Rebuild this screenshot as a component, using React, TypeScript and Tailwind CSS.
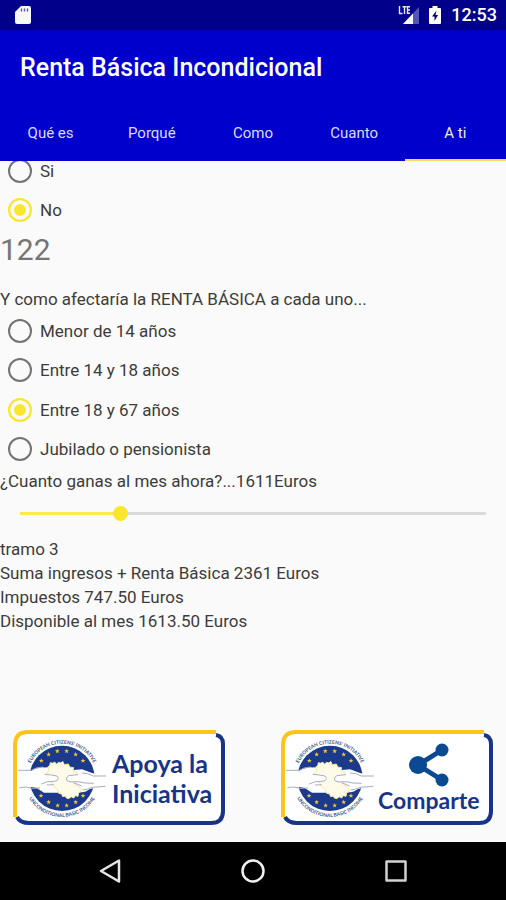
import React, { useState } from 'react';

const tabs = ['Qué es', 'Porqué', 'Como', 'Cuanto', 'A ti'];
const ages = ['Menor de 14 años', 'Entre 14 y 18 años', 'Entre 18 y 67 años', 'Jubilado o pensionista'];
const MAX_INCOME = 7800;

const stars = [
  [88, 92], [110, 73], [136, 63], [164, 63], [191, 73], [213, 92],
  [87, 197], [110, 216], [137, 226], [164, 226], [191, 216], [213, 197],
];

const starPath = 'M0 -7 L2 -2 L7 -2 L3 1.5 L4.5 6.5 L0 3.5 L-4.5 6.5 L-3 1.5 L-7 -2 L-2 -2 Z';

const StatusBar = () => (
  <div className="flex h-[30px] shrink-0 items-center bg-[#00008b] pr-[9px] pl-[15px] text-white">
    <svg width="16" height="20" viewBox="0 0 16 20" aria-hidden="true">
      <path d="M6 1h8q2 0 2 2v14q0 2-2 2H2q-2 0-2-2V7z" fill="#f7f7f7" />
      <path d="M6.500 3.500v3M9.500 3.500v3M12.500 3.500v3" stroke="#5a5aa8" strokeWidth="1.400" />
    </svg>
    <svg className="ml-auto" width="22" height="20" viewBox="0 0 22 20" aria-hidden="true">
      <path d="M21 2v17H5z" fill="#5555b8" />
      <path d="M15 8.500V19H5z" fill="#fff" />
      <path d="M1.500 1v7.500h3M4.500 1.800h4M6.500 1.800V9M12 1.800H9.500V8.200H12M9.500 5H12" fill="none" stroke="#e8e8f8" strokeWidth="1.400" />
    </svg>
    <svg className="ml-[9px]" width="12" height="20" viewBox="0 0 12 20" aria-hidden="true">
      <path d="M3.500 1h5v2H11q1 0 1 1v14q0 1-1 1H1q-1 0-1-1V4q0-1 1-1h2.500z" fill="#fff" />
      <path d="M7.500 5.500L3 11.500h2.500v4.500L9 10H6.500z" fill="#00008b" />
    </svg>
    <span className="ml-[10px] text-[18px] leading-[24px] font-medium">12:53</span>
  </div>
);

type RadioProps = {
  name: string;
  label: string;
  checked: boolean;
  onChange: () => void;
};

const Radio = ({ name, label, checked, onChange }: RadioProps) => (
  <label className="flex items-center gap-2 pl-2">
    <input
      type="radio"
      name={name}
      checked={checked}
      onChange={onChange}
      className="size-6 appearance-none rounded-full border-2 border-[#737373] checked:border-[#fbe62e] checked:bg-[#fbe62e] checked:shadow-[inset_0_0_0_4px_#fafafa]"
    />
    {label}
  </label>
);

const Emblem = ({ id }: { id: string }) => (
  <svg width="99" height="96" viewBox="3 0 297 288" className="shrink-0" aria-hidden="true">
    <defs>
      <path id={`${id}-top`} d="M45 146a105 105 0 0 1 210 0" />
      <path id={`${id}-bottom`} d="M35 146a115 115 0 0 0 230 0" />
    </defs>
    <circle cx="150" cy="145" r="98" fill="#1c3a8c" />
    {stars.map(([x, y]) => (
      <path key={`${x}-${y}`} d={starPath} transform={`translate(${x} ${y})`} fill="#f4c63c" />
    ))}
    {/* arms */}
    <path d="M18 121l40 1q12-8 29-9l20-1 45 20 34-12 24-2 28 10 44 12v29l-36 4q-14 2-30 13l-20 2H96l-22-14-20-4-36-2z" fill="#fefefe" />
    {/* map of Europe */}
    <path
      d="M102 132l8-10-2-12 5-2 2-10 8 2 4-4 7 6 6-5 7 2 5-5 5 10 12-2 4 9 12 2-2 9 14 8-12 12-4 14 22 16 5 12-8 4-2 11-8-2-5 7-8-4-6 6-8-2-3-6-8 2-3-8-9-2-4-12-13-10-9-22z"
      fill="#fffbe9"
      stroke="#f5e6a8"
      strokeWidth="3"
    />
    {/* hands */}
    <path d="M60 122q12-8 34-10l8 20q30 2 39 8 6 8-2 12-10 4-30 4l-15 17-34-3z" fill="#fefefe" />
    <path d="M244 136q-18-13-36-16l-16 14q-24 2-28 12 0 9 20 9l22 14 14 16q14-10 26-12z" fill="#fefefe" />
    <path
      d="M18 121h40q12-9 34-10M22 173q20-5 38 2l24-1M98 133q18 1 37 5 9 7 0 14-15 4-29 3l-18 7M105 165l20-1M282 138h-38q-18-10-34-9M280 169l-40 3q-13 7-28 8M198 134l-28 3q-11 7-5 15 9 6 20 3 16-1 34 4l26 1M185 158l24 10"
      fill="none"
      stroke="#a7adc5"
      strokeWidth="3"
    />
    <g fill="#42548c" fontSize="15" className="font-[Lato,sans-serif]">
      <text>
        <textPath href={`#${id}-top`} startOffset="50%" textAnchor="middle">EUROPEAN CITIZENS' INITIATIVE</textPath>
      </text>
      <text>
        <textPath href={`#${id}-bottom`} startOffset="50%" textAnchor="middle">UNCONDITIONAL BASIC INCOME</textPath>
      </text>
    </g>
  </svg>
);

const BannerButton = ({ id, children }: { id: string; children: React.ReactNode }) => (
  <button
    type="button"
    className="relative flex h-24 w-[213px] items-center rounded-[14px] bg-white font-[Lato,sans-serif] font-bold text-[#173489]"
  >
    <svg className="absolute inset-0 size-full" viewBox="0 0 213 96" fill="none" strokeWidth="4" aria-hidden="true">
      <path d="M2 87V15Q2 2 15 2H203" stroke="#fcc41c" />
      <path d="M203 5Q210 6 210 14V81Q210 93 198 93H16Q7 93 4 87" stroke="#173489" />
    </svg>
    <Emblem id={id} />
    {children}
  </button>
);

const App = () => {
  const [tab, setTab] = useState('A ti');
  const [answer, setAnswer] = useState('No');
  const [age, setAge] = useState('Entre 18 y 67 años');
  const [income, setIncome] = useState<number>(1611);
  const filled = (income / MAX_INCOME) * 100;

  return (
    <div className="flex h-screen flex-col bg-[#fafafa] font-[Roboto,sans-serif] text-[17px] leading-[24px] text-[#3c3c3c]">
      <StatusBar />
      <header className="shrink-0 bg-[#0000cd] text-white">
        <h1 className="flex h-[75px] items-center px-5 text-[25px] leading-[30px] font-medium">Renta Básica Incondicional</h1>
        <nav className="grid h-14 grid-cols-5">
          {tabs.map((t) => (
            <button
              key={t}
              type="button"
              onClick={() => setTab(t)}
              className={`border-b-2 pt-[2px] text-[15px] ${t === tab ? 'border-[#fbdc50] text-[#ececfc]' : 'border-transparent text-[#dcdcf8]'}`}
            >
              {t}
            </button>
          ))}
        </nav>
      </header>

      <main className="flex flex-1 flex-col overflow-hidden">
        <div className="-mt-[10px]">
          <div className="grid h-[79px] grid-rows-2">
            {['Si', 'No'].map((o) => (
              <Radio key={o} name="answer" label={o} checked={answer === o} onChange={() => setAnswer(o)} />
            ))}
          </div>
          <p className="text-[30px] leading-[40px] text-[#757575]">122</p>
          <p className="mt-[17px]">Y como afectaría la RENTA BÁSICA a cada uno...</p>
          <div className="grid h-[158px] grid-rows-4">
            {ages.map((a) => (
              <Radio key={a} name="age" label={a} checked={age === a} onChange={() => setAge(a)} />
            ))}
          </div>
          <label htmlFor="income" className="block">¿Cuanto ganas al mes ahora?...{income}Euros</label>
          <div className="flex h-10 items-center px-5">
            <input
              id="income"
              type="range"
              min={0}
              max={MAX_INCOME}
              value={income}
              onChange={(e) => setIncome(Number(e.target.value))}
              className="h-[3px] w-full appearance-none [&::-webkit-slider-thumb]:size-[15px] [&::-webkit-slider-thumb]:appearance-none [&::-webkit-slider-thumb]:rounded-full [&::-webkit-slider-thumb]:bg-[#fbe62e]"
              style={{ background: `linear-gradient(to right, #fbe94e ${filled}%, #dadada ${filled}%)` }}
            />
          </div>
          <div className="mt-1">
            <p>tramo 3</p>
            <p>Suma ingresos + Renta Básica 2361 Euros</p>
            <p>Impuestos 747.50 Euros</p>
            <p>Disponible al mes 1613.50 Euros</p>
          </div>
        </div>

        <div className="mt-auto flex justify-between pr-3 pb-4 pl-[13px]">
          <BannerButton id="apoya">
            <span className="text-left text-[25px] leading-[30px]">
              Apoya la
              <br />
              Iniciativa
            </span>
          </BannerButton>
          <BannerButton id="comparte">
            <span className="-ml-[2px] flex flex-col items-center">
              <svg width="40" height="44" viewBox="0 0 40 44" aria-hidden="true">
                <path d="M33 7L9 22l24 15" fill="none" stroke="#0b4a92" strokeWidth="5" />
                <circle cx="9" cy="22" r="9" fill="#0b4a92" />
                <circle cx="33" cy="7" r="6.500" fill="#0b4a92" />
                <circle cx="33" cy="37" r="6.500" fill="#0b4a92" />
              </svg>
              <span className="text-[23px] leading-[26px]">Comparte</span>
            </span>
          </BannerButton>
        </div>
      </main>

      <footer className="flex h-[58px] shrink-0 items-center justify-center gap-[119px] bg-black">
        <button type="button" aria-label="Atrás">
          <svg width="24" height="24" viewBox="0 0 24 24" fill="none" stroke="#e6e6e6" strokeWidth="2.500" strokeLinejoin="round">
            <path d="M21 1.500v21L3 12z" />
          </svg>
        </button>
        <button type="button" aria-label="Inicio">
          <svg width="24" height="24" viewBox="0 0 24 24" fill="none" stroke="#f0f0f0" strokeWidth="2.500">
            <circle cx="12" cy="12" r="10.500" />
          </svg>
        </button>
        <button type="button" aria-label="Recientes">
          <svg width="24" height="24" viewBox="0 0 24 24" fill="none" stroke="#d2d2d2" strokeWidth="2.500" strokeLinejoin="round">
            <path d="M2.500 2.500h19v19h-19z" />
          </svg>
        </button>
      </footer>
    </div>
  );
};

export default App;
